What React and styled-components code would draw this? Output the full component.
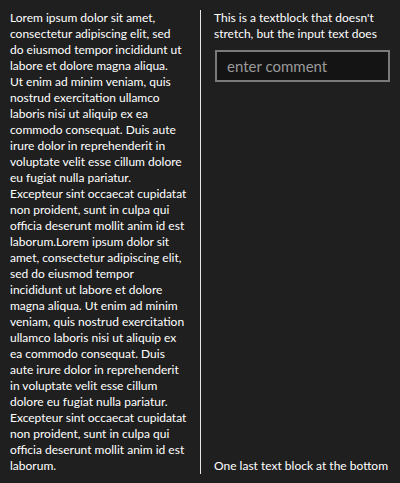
import React from 'react';
import styled, { createGlobalStyle } from 'styled-components';

const GlobalStyle = createGlobalStyle`
  html, body {
    margin: 0;
    padding: 0;
    background: #1f1f1f;
  }
  body {
    font-family: Lato, "Open Sans", sans-serif;
    color: #ffffff;
  }
`;

const leftLines = [
  'Lorem ipsum dolor sit amet,',
  'consectetur adipiscing elit, sed',
  'do eiusmod tempor incididunt ut',
  'labore et dolore magna aliqua.',
  'Ut enim ad minim veniam, quis',
  'nostrud exercitation ullamco',
  'laboris nisi ut aliquip ex ea',
  'commodo consequat. Duis aute',
  'irure dolor in reprehenderit in',
  'voluptate velit esse cillum dolore',
  'eu fugiat nulla pariatur.',
  'Excepteur sint occaecat cupidatat',
  'non proident, sunt in culpa qui',
  'officia deserunt mollit anim id est',
  'laborum.Lorem ipsum dolor sit',
  'amet, consectetur adipiscing elit,',
  'sed do eiusmod tempor',
  'incididunt ut labore et dolore',
  'magna aliqua. Ut enim ad minim',
  'veniam, quis nostrud exercitation',
  'ullamco laboris nisi ut aliquip ex',
  'ea commodo consequat. Duis',
  'aute irure dolor in reprehenderit',
  'in voluptate velit esse cillum',
  'dolore eu fugiat nulla pariatur.',
  'Excepteur sint occaecat cupidatat',
  'non proident, sunt in culpa qui',
  'officia deserunt mollit anim id est',
  'laborum.',
];

const rightLines = [
  "This is a textblock that doesn't",
  'stretch, but the input text does',
];

export default function App() {
  return (
    <>
      <GlobalStyle />
      <Page>
        <LeftColumn>
          <TextBlock>{leftLines.join('\n')}</TextBlock>
        </LeftColumn>
        <Divider />
        <RightColumn>
          <TextBlock>{rightLines.join('\n')}</TextBlock>
          <CommentInput placeholder="enter comment" />
          <Spacer />
          <TextBlock>One last text block at the bottom</TextBlock>
        </RightColumn>
      </Page>
    </>
  );
}

const Page = styled.div`
  display: grid;
  grid-template-columns: 190px 1px 1fr;
  height: 483px;
  box-sizing: border-box;
  padding: 10px 10px 11px 10px;
`;

const LeftColumn = styled.div`
  display: flex;
  flex-direction: column;
`;

const Divider = styled.div`
  background: #e6e6e6;
  width: 1px;
  margin-left: 0;
`;

const RightColumn = styled.div`
  display: flex;
  flex-direction: column;
  padding-left: 13px;
`;

const TextBlock = styled.div`
  font-size: 12px;
  line-height: 16px;
  white-space: pre;
  color: #ffffff;
`;

const CommentInput = styled.input`
  margin-top: 8px;
  margin-left: 1px;
  width: 175px;
  height: 32px;
  box-sizing: border-box;
  background: #141414;
  border: 2px solid #7a7a7a;
  color: #ffffff;
  font-family: Lato, "Open Sans", sans-serif;
  font-size: 15px;
  padding: 0 10px;
  outline: none;

  &::placeholder {
    color: #9a9a9a;
  }
`;

const Spacer = styled.div`
  flex: 1;
`;
